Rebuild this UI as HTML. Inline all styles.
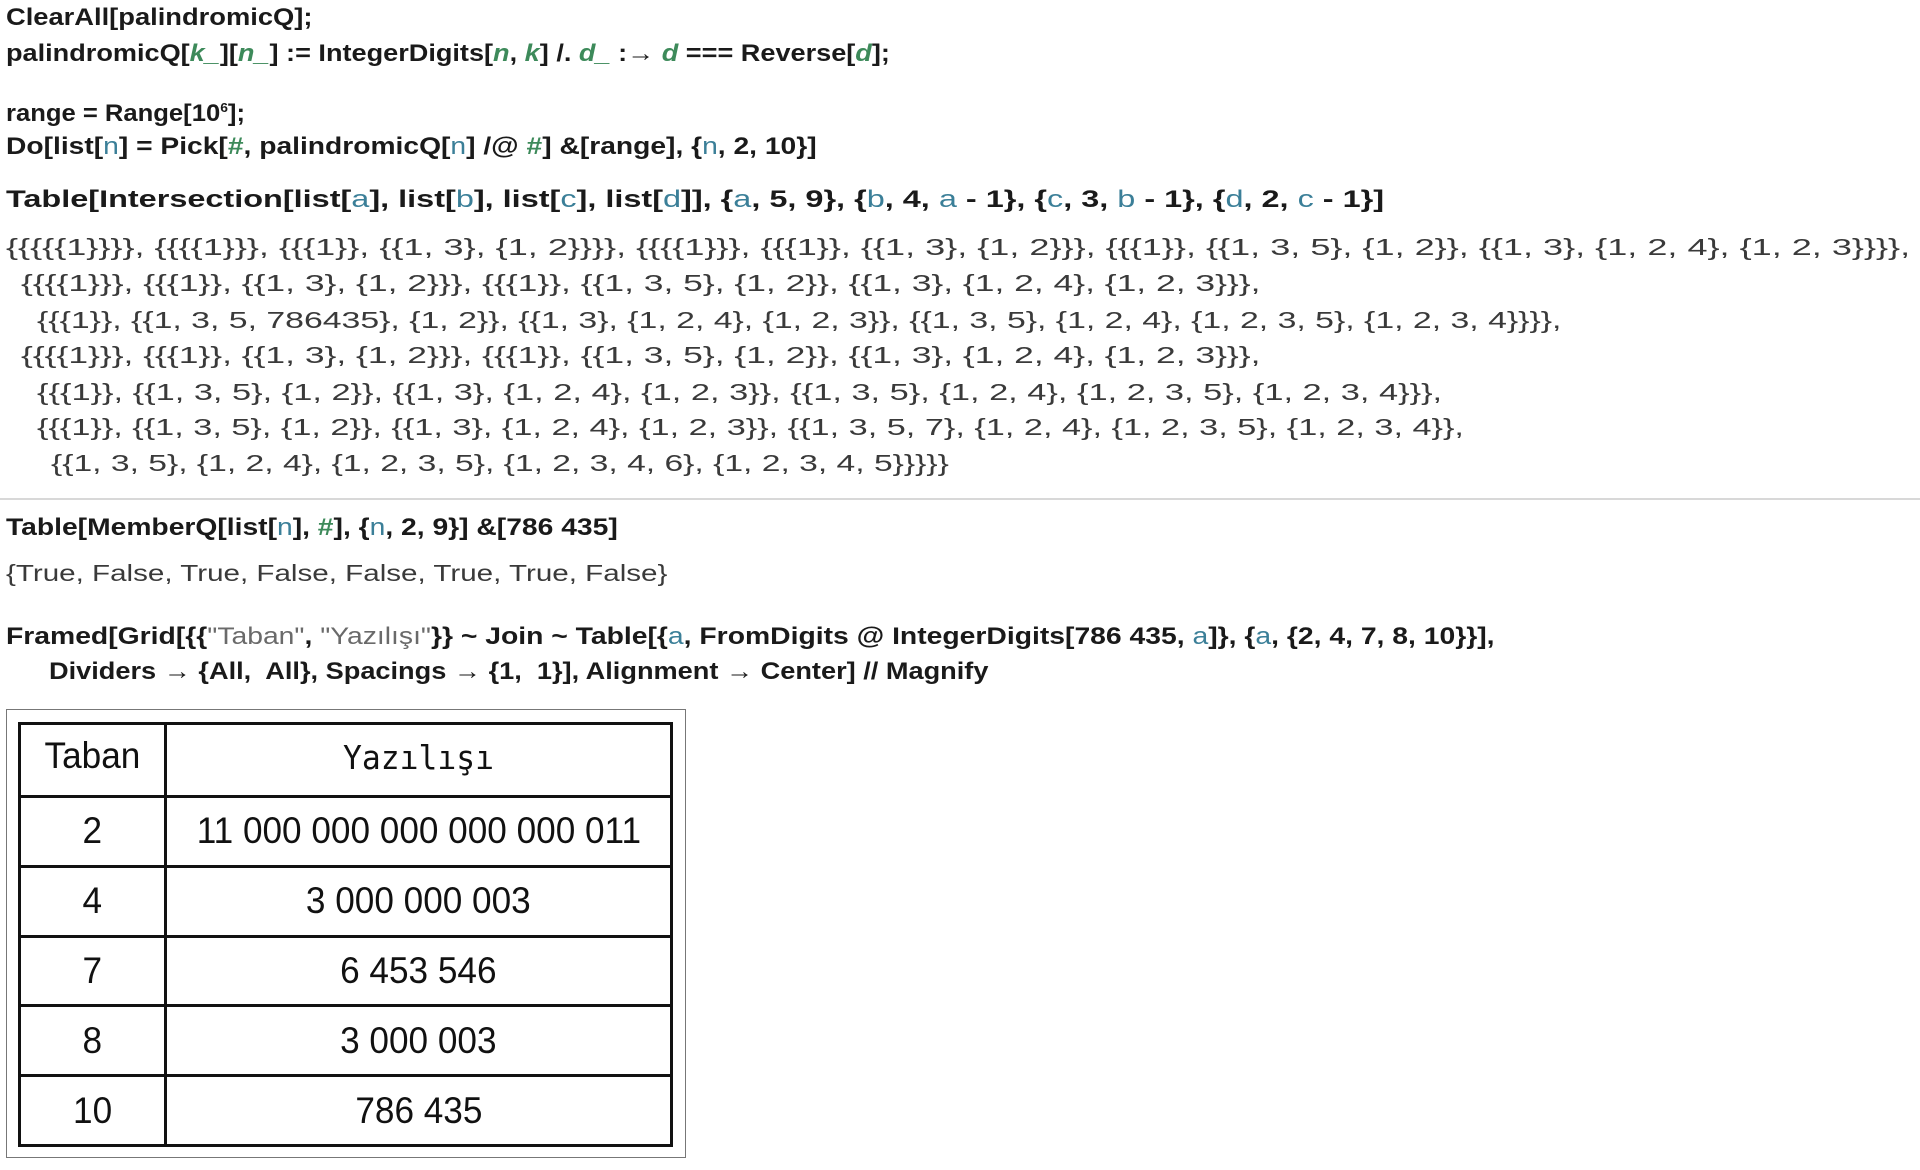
<!DOCTYPE html>
<html><head><meta charset="utf-8">
<style>
html,body{margin:0;padding:0;background:#fff;width:1920px;height:1170px;overflow:hidden}
.l{position:absolute;white-space:nowrap;height:30px;line-height:30px;transform-origin:0 50%;font-family:"Liberation Sans",sans-serif}
.c{font-size:24px;font-weight:bold;color:#1a1a1a}
.o{font-size:23px;color:#3a3a3a}
.g{color:#3d8a5a;font-style:italic}
.gn{color:#3d8a5a}
.b{color:#3b7f98;font-weight:normal}
.s{color:#6a6a6a;font-weight:normal}
#sep{position:absolute;left:0;top:498px;width:1920px;height:2px;background:#d8d8d8}
#frame{position:absolute;left:6px;top:709px;width:680px;height:449px;border:1px solid #777;box-sizing:border-box}
table{position:absolute;left:18px;top:722px;width:655px;height:425px;border-collapse:collapse;font-family:"Liberation Sans",sans-serif;font-size:37px;color:#111}
td{border:3px solid #111;text-align:center;padding:0}
td:first-child{width:143px}
td span{display:inline-block;transform:scaleX(0.95)}
</style></head><body>
<div class="l c" style="left:6px;top:3px" w="306">ClearAll[palindromicQ];</div>
<div class="l c" style="left:6px;top:39px" w="884">palindromicQ[<span class="g">k_</span>][<span class="g">n_</span>] := IntegerDigits[<span class="g">n</span>, <span class="g">k</span>] /. <span class="g">d_</span> :→ <span class="g">d</span> === Reverse[<span class="g">d</span>];</div>
<div class="l c" style="left:6px;top:93px" w="239">range = Range[10<sup style="font-size:13px">6</sup>];</div>
<div class="l c" style="left:6px;top:132px" w="811">Do[list[<span class="b">n</span>] = Pick[<span class="gn">#</span>, palindromicQ[<span class="b">n</span>] /@ <span class="gn">#</span>] &amp;[range], {<span class="b">n</span>, 2, 10}]</div>
<div class="l c" style="left:6px;top:185px" w="1378">Table[Intersection[list[<span class="b">a</span>], list[<span class="b">b</span>], list[<span class="b">c</span>], list[<span class="b">d</span>]], {<span class="b">a</span>, 5, 9}, {<span class="b">b</span>, 4, <span class="b">a</span> - 1}, {<span class="b">c</span>, 3, <span class="b">b</span> - 1}, {<span class="b">d</span>, 2, <span class="b">c</span> - 1}]</div>
<div class="l o" style="left:6px;top:232px" w="1904">{{{{{1}}}}, {{{{1}}}, {{{1}}, {{1, 3}, {1, 2}}}}, {{{{1}}}, {{{1}}, {{1, 3}, {1, 2}}}, {{{1}}, {{1, 3, 5}, {1, 2}}, {{1, 3}, {1, 2, 4}, {1, 2, 3}}}},</div>
<div class="l o" style="left:21px;top:268px" w="1240">{{{{1}}}, {{{1}}, {{1, 3}, {1, 2}}}, {{{1}}, {{1, 3, 5}, {1, 2}}, {{1, 3}, {1, 2, 4}, {1, 2, 3}}},</div>
<div class="l o" style="left:37px;top:305px" w="1524">{{{1}}, {{1, 3, 5, 786435}, {1, 2}}, {{1, 3}, {1, 2, 4}, {1, 2, 3}}, {{1, 3, 5}, {1, 2, 4}, {1, 2, 3, 5}, {1, 2, 3, 4}}}},</div>
<div class="l o" style="left:21px;top:340px" w="1240">{{{{1}}}, {{{1}}, {{1, 3}, {1, 2}}}, {{{1}}, {{1, 3, 5}, {1, 2}}, {{1, 3}, {1, 2, 4}, {1, 2, 3}}},</div>
<div class="l o" style="left:37px;top:377px" w="1405">{{{1}}, {{1, 3, 5}, {1, 2}}, {{1, 3}, {1, 2, 4}, {1, 2, 3}}, {{1, 3, 5}, {1, 2, 4}, {1, 2, 3, 5}, {1, 2, 3, 4}}},</div>
<div class="l o" style="left:37px;top:412px" w="1427">{{{1}}, {{1, 3, 5}, {1, 2}}, {{1, 3}, {1, 2, 4}, {1, 2, 3}}, {{1, 3, 5, 7}, {1, 2, 4}, {1, 2, 3, 5}, {1, 2, 3, 4}},</div>
<div class="l o" style="left:51px;top:448px" w="898">{{1, 3, 5}, {1, 2, 4}, {1, 2, 3, 5}, {1, 2, 3, 4, 6}, {1, 2, 3, 4, 5}}}}}</div>
<div id="sep"></div>
<div class="l c" style="left:6px;top:513px" w="612">Table[MemberQ[list[<span class="b">n</span>], <span class="gn">#</span>], {<span class="b">n</span>, 2, 9}] &amp;[786 435]</div>
<div class="l o" style="left:6px;top:558px" w="661">{True, False, True, False, False, True, True, False}</div>
<div class="l c" style="left:6px;top:622px" w="1488">Framed[Grid[{{<span class="s">"Taban"</span>, <span class="s">"Yazılışı"</span>}} ~ Join ~ Table[{<span class="b">a</span>, FromDigits @ IntegerDigits[786 435, <span class="b">a</span>]}, {<span class="b">a</span>, {2, 4, 7, 8, 10}}],</div>
<div class="l c" style="left:49px;top:657px" w="939">Dividers → {All,&nbsp; All}, Spacings → {1,&nbsp; 1}], Alignment → Center] // Magnify</div>
<div id="frame"></div>
<table>
<tr style="height:73px"><td><span style="position:relative;top:-4px">Taban</span></td><td style="font-family:'DejaVu Sans Mono','Liberation Mono',monospace;font-size:33px"><span style="position:relative;top:-3px">Yazılışı</span></td></tr>
<tr><td><span>2</span></td><td><span>11 000 000 000 000 000 011</span></td></tr>
<tr><td><span>4</span></td><td><span>3 000 000 003</span></td></tr>
<tr><td><span>7</span></td><td><span>6 453 546</span></td></tr>
<tr><td><span>8</span></td><td><span>3 000 003</span></td></tr>
<tr><td><span>10</span></td><td><span>786 435</span></td></tr>
</table>
<script>
document.querySelectorAll('.l').forEach(function(e){
  var w=parseFloat(e.getAttribute('w'));var n=e.scrollWidth;
  if(n>0)e.style.transform='scaleX('+(w/n)+')';
});
</script>
</body></html>
